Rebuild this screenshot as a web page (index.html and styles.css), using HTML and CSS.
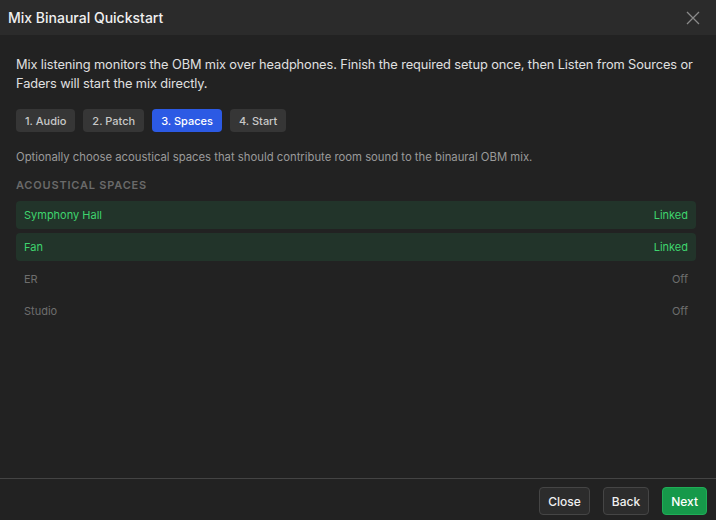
FILE: index.html
```html
<!DOCTYPE html>
<html lang="en">
<head>
    <meta charset="UTF-8">
    <title>Mix Binaural Quickstart</title>
    <link rel="stylesheet" href="styles.css">
</head>
<body>
    <div class="dialog">
        <header class="dialog-header">
            <h1>Mix Binaural Quickstart</h1>
            <button class="close-x" aria-label="Close">
                <svg width="14" height="14" viewBox="0 0 14 14">
                    <path d="M1 1 L13 13 M13 1 L1 13" stroke="#8a8a8a" stroke-width="1.3" fill="none"/>
                </svg>
            </button>
        </header>

        <main class="dialog-body">
            <p class="intro">Mix listening monitors the OBM mix over headphones. Finish the required setup once, then Listen from Sources or Faders will start the mix directly.</p>

            <nav class="steps">
                <button class="step">1. Audio</button>
                <button class="step">2. Patch</button>
                <button class="step active">3. Spaces</button>
                <button class="step">4. Start</button>
            </nav>

            <p class="hint">Optionally choose acoustical spaces that should contribute room sound to the binaural OBM mix.</p>

            <h2 class="section-title">Acoustical Spaces</h2>
            <ul class="spaces">
                <li class="space linked"><span>Symphony Hall</span><span>Linked</span></li>
                <li class="space linked"><span>Fan</span><span>Linked</span></li>
                <li class="space"><span>ER</span><span>Off</span></li>
                <li class="space"><span>Studio</span><span>Off</span></li>
            </ul>
        </main>

        <footer class="dialog-footer">
            <button class="btn">Close</button>
            <button class="btn">Back</button>
            <button class="btn primary">Next</button>
        </footer>
    </div>
</body>
</html>
```

FILE: styles.css
```css
html, body {
    margin: 0;
    padding: 0;
    height: 100%;
}

body {
    font-family: Inter, "Noto Sans", sans-serif;
    background-color: #222222;
    color: #e2e2e2;
}

.dialog {
    display: flex;
    flex-direction: column;
    height: 100vh;
}

.dialog-header {
    display: flex;
    justify-content: space-between;
    align-items: center;
    height: 35px;
    padding: 0 16px 0 8px;
    background-color: #2b2b2b;
}

.dialog-header h1 {
    margin: 0;
    font-size: 14px;
    font-weight: 500;
    color: #f0f0f0;
}

.close-x {
    background: none;
    border: none;
    padding: 0;
    display: flex;
    cursor: pointer;
}

.dialog-body {
    flex: 1;
    padding: 20px 16px 0;
}

.intro {
    margin: 0;
    font-size: 12.8px;
    line-height: 19px;
    letter-spacing: -0.1px;
    color: #e0e0e0;
}

.steps {
    display: flex;
    gap: 8px;
    margin-top: 16px;
}

.step {
    font-family: inherit;
    font-size: 11px;
    font-weight: 500;
    color: #c8c8c8;
    background-color: #363636;
    border: none;
    border-radius: 4px;
    height: 23px;
    padding: 0 9px;
}

.step.active {
    background-color: #2c5ae4;
    color: #ffffff;
}

.hint {
    margin: 18px 0 0;
    font-size: 11.3px;
    color: #9a9a9a;
}

.section-title {
    margin: 14px 0 0;
    font-size: 11px;
    font-weight: 600;
    letter-spacing: 0.8px;
    text-transform: uppercase;
    color: #6a6a6a;
}

.spaces {
    list-style: none;
    margin: 9px 4px 0 0;
    padding: 0;
    display: flex;
    flex-direction: column;
    gap: 4px;
}

.space {
    display: flex;
    justify-content: space-between;
    align-items: center;
    height: 28px;
    padding: 0 8px;
    border-radius: 4px;
    font-size: 11px;
    color: #6e6e6e;
}

.space.linked {
    background-color: #22342a;
    color: #3fd46e;
}

.dialog-footer {
    display: flex;
    justify-content: flex-end;
    gap: 13px;
    padding: 8px 9px 5px;
    border-top: 1px solid #444444;
}

.btn {
    font-family: inherit;
    font-size: 12px;
    font-weight: 500;
    color: #f0f0f0;
    background-color: #2c2c2c;
    border: 1px solid #454545;
    border-radius: 4px;
    height: 28px;
    padding: 0 8px;
}

.btn.primary {
    background-color: #16994a;
    border-color: #1fae57;
    color: #ffffff;
}
```
